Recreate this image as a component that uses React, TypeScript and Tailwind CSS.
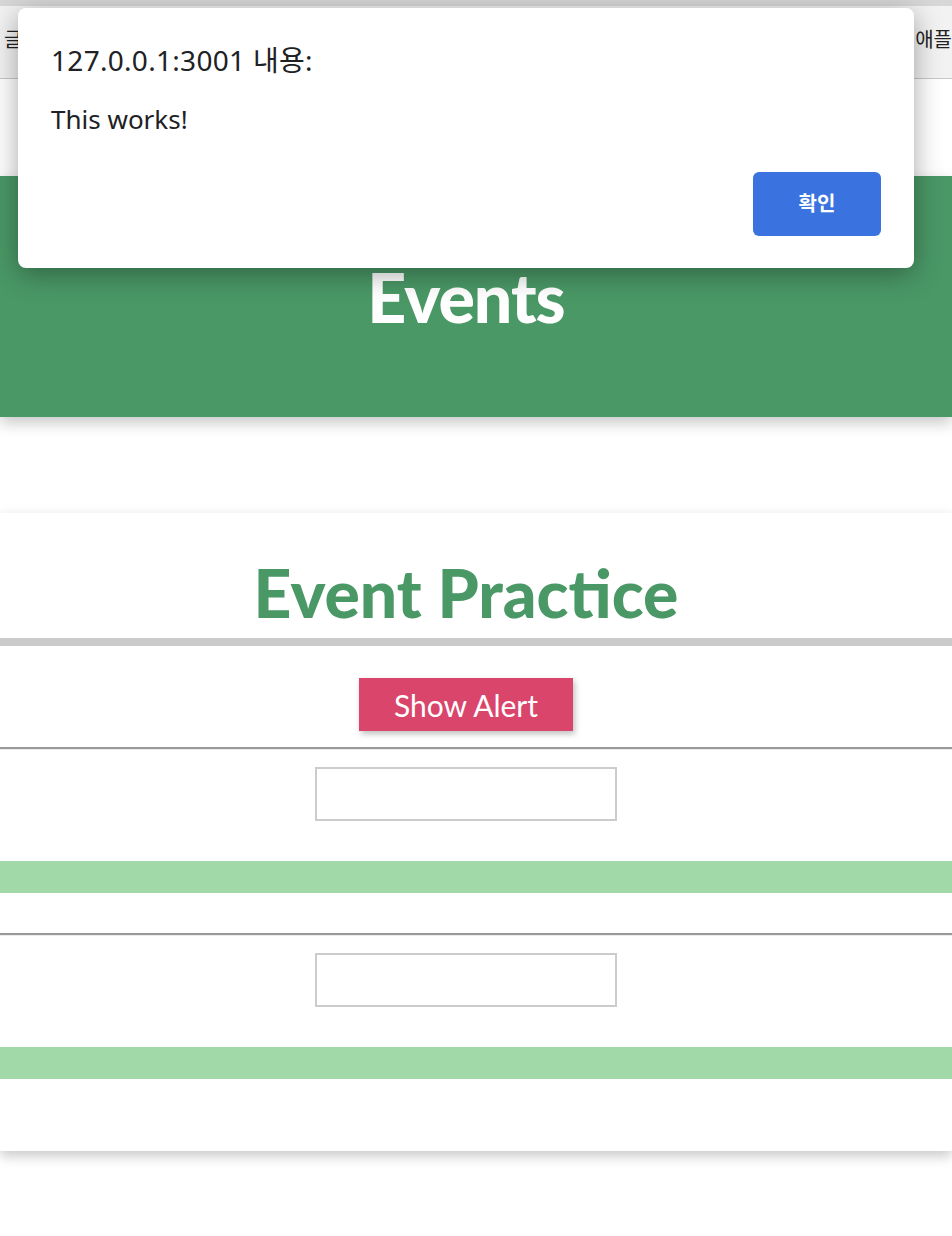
import React from "react";

const headFont = { fontFamily: "Lato, 'Liberation Sans', sans-serif" };

const InputBlock = () => {
  return (
    <div className="flex flex-col">
      <div className="h-[3px] border-t-2 border-[#999999] border-b border-b-[#ececec]"></div>
      <div className="flex justify-center pt-[17px] pr-[20px]">
        <input
          type="text"
          className="w-[302px] h-[54px] border-2 border-[#cccccc] bg-white outline-none"
        />
      </div>
      <div className="h-[40px]"></div>
      <div className="h-[32px] bg-[#a1d9a8]"></div>
    </div>
  );
};

const App = () => {
  return (
    <div
      className="relative w-[952px] h-[1236px] bg-white overflow-hidden"
      style={{ fontFamily: "'Noto Sans', 'Noto Sans CJK KR', sans-serif" }}
    >
      {/* browser bar */}
      <div className="h-[6px] bg-[#d7d7d7]"></div>
      <div className="h-[73px] bg-[#f2f2f2] border-b border-[#c8c8c8] flex items-start justify-between pt-[24px] overflow-hidden">
        <span className="text-[20px] text-[#222] leading-none pl-[4px]">글</span>
        <span className="text-[20px] text-[#222] leading-none whitespace-nowrap">애플</span>
      </div>

      {/* page */}
      <div className="h-[97px] bg-white"></div>
      <div className="relative h-[241px] bg-[#4a9866] flex items-center justify-center pr-[20px] shadow-[0_6px_14px_rgba(0,0,0,0.22)]">
        <h1
          className="text-white text-[68px] font-black leading-none tracking-[-1px]"
          style={headFont}
        >
          Events
        </h1>
      </div>

      <div className="h-[96px]"></div>

      <div className="relative bg-white shadow-[0_5px_12px_rgba(0,0,0,0.22)] flex flex-col">
        <div className="h-[125px] flex items-center justify-center pt-[35px] pr-[20px]">
          <h2
            className="text-[#4a9866] text-[66px] font-black leading-none"
            style={headFont}
          >
            Event Practice
          </h2>
        </div>
        <div className="h-[8px] bg-[#cbcbcb]"></div>
        <div className="flex justify-center pt-[32px] pb-[16px] pr-[20px]">
          <button
            className="w-[214px] h-[53px] bg-[#d9456b] text-white text-[30px] leading-none shadow-[2px_3px_6px_rgba(0,0,0,0.25)]"
            style={headFont}
          >
            Show Alert
          </button>
        </div>
        <InputBlock />
        <div className="h-[40px]"></div>
        <InputBlock />
        <div className="h-[72px]"></div>
      </div>

      {/* alert dialog */}
      <div className="absolute left-[18px] top-[8px] w-[896px] h-[260px] bg-white rounded-[8px] shadow-[0_6px_28px_rgba(0,0,0,0.35)] flex flex-col px-[33px] pt-[38px] pb-[32px]">
        <p className="text-[28px] leading-none text-[#202124] tracking-[0.3px]">127.0.0.1:3001 내용:</p>
        <p className="text-[26px] leading-none text-[#202124] mt-[32px]">This works!</p>
        <div className="flex justify-end mt-auto">
          <button className="w-[128px] h-[64px] rounded-[6px] bg-[#3a73e0] text-white text-[20px] font-semibold">
            확인
          </button>
        </div>
      </div>
    </div>
  );
};

export default App;
